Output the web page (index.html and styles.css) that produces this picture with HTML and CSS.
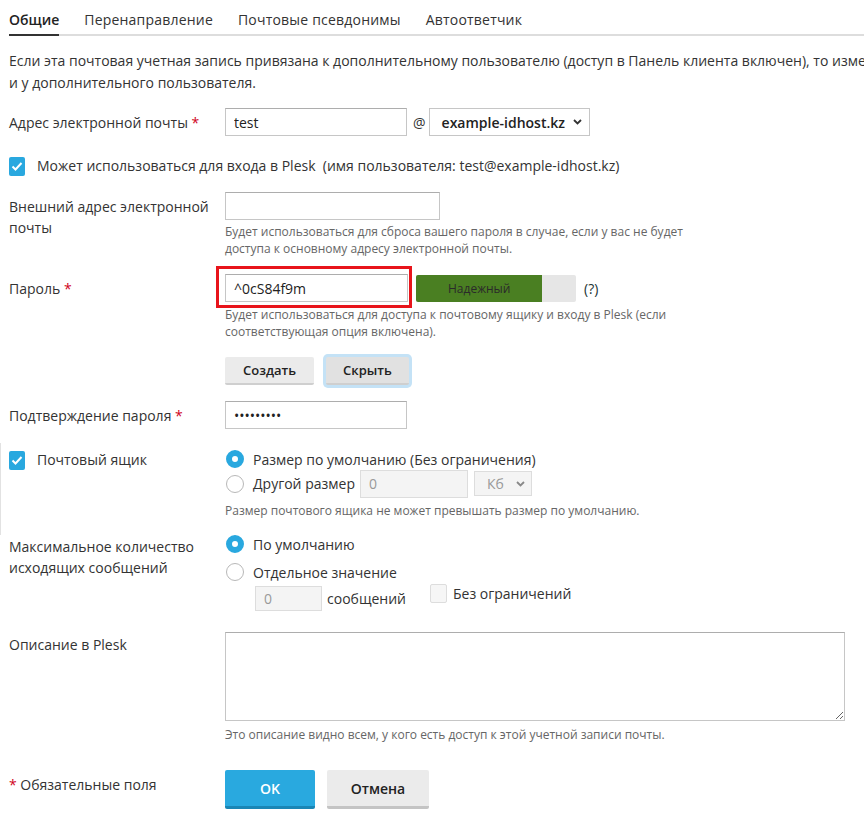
FILE: index.html
```html
<html>
<head>
    <meta charset="utf-8">
    <link rel="stylesheet" href="styles.css">
</head>
<body>
<div class="page">
    <div class="tabs">
        <span class="tab active">Общие</span>
        <span class="tab">Перенаправление</span>
        <span class="tab">Почтовые псевдонимы</span>
        <span class="tab">Автоответчик</span>
    </div>

    <p class="intro">Если эта почтовая учетная запись привязана к дополнительному пользователю (доступ в Панель клиента включен), то изменения будут применены<br>и у дополнительного пользователя.</p>

    <div class="row row-email">
        <div class="label">Адрес электронной почты <span class="req">*</span></div>
        <div class="field inline">
            <input class="input w-email" type="text" value="test">
            <span class="at">@</span>
            <div class="select select-domain">
                <span>example-idhost.kz</span>
                <svg width="9" height="6" viewBox="0 0 9 6"><path d="M1 1l3.5 3.5L8 1" fill="none" stroke="#333" stroke-width="1.8"/></svg>
            </div>
        </div>
    </div>

    <div class="row row-login">
        <div class="check">
            <span class="cb checked"><svg width="16" height="19" viewBox="0 0 16 19"><path d="M3.5 9.5l3 3 6-6.5" fill="none" stroke="#fff" stroke-width="2"/></svg></span>
            <span>Может использоваться для входа в Plesk &nbsp;(имя пользователя: test@example-idhost.kz)</span>
        </div>
    </div>

    <div class="row row-ext">
        <div class="label">Внешний адрес электронной почты</div>
        <div class="field">
            <input class="input w-ext" type="text" value="">
            <div class="hint">Будет использоваться для сброса вашего пароля в случае, если у вас не будет доступа к основному адресу электронной почты.</div>
        </div>
    </div>

    <div class="row row-pass">
        <div class="label">Пароль <span class="req">*</span></div>
        <div class="field">
            <div class="inline">
                <div class="marked">
                    <input class="input w-pass" type="text" value="^0cS84f9m">
                </div>
                <div class="strength">
                    <div class="strength-fill" style="width:79%">Надежный</div>
                </div>
                <span class="help">(?)</span>
            </div>
            <div class="hint">Будет использоваться для доступа к почтовому ящику и входу в Plesk (если соответствующая опция включена).</div>
            <div class="pass-buttons">
                <button class="btn">Создать</button>
                <button class="btn focused">Скрыть</button>
            </div>
        </div>
    </div>

    <div class="row row-confirm">
        <div class="label">Подтверждение пароля <span class="req">*</span></div>
        <div class="field">
            <input class="input w-confirm" type="password" value="^0cS84f9m">
        </div>
    </div>

    <div class="row row-mailbox">
        <div class="label-check">
            <span class="cb checked"><svg width="16" height="19" viewBox="0 0 16 19"><path d="M3.5 9.5l3 3 6-6.5" fill="none" stroke="#fff" stroke-width="2"/></svg></span>
            <span>Почтовый ящик</span>
        </div>
        <div class="field">
            <div class="opt">
                <span class="radio on"></span>
                <span>Размер по умолчанию (Без ограничения)</span>
            </div>
            <div class="opt opt-size">
                <span class="radio"></span>
                <span>Другой размер</span>
                <input class="input disabled w-size" type="text" value="0" disabled>
                <div class="select disabled select-unit">
                    <span>Кб</span>
                    <svg width="9" height="6" viewBox="0 0 9 6"><path d="M1 1l3.5 3.5L8 1" fill="none" stroke="#888" stroke-width="1.8"/></svg>
                </div>
            </div>
            <div class="hint hint-mailbox">Размер почтового ящика не может превышать размер по умолчанию.</div>
        </div>
    </div>

    <div class="row row-out">
        <div class="label label-out">Максимальное количество исходящих сообщений</div>
        <div class="field">
            <div class="opt">
                <span class="radio on"></span>
                <span>По умолчанию</span>
            </div>
            <div class="opt opt-custom">
                <span class="radio"></span>
                <span>Отдельное значение</span>
            </div>
            <div class="out-value">
                <input class="input disabled w-count" type="text" value="0" disabled>
                <span>сообщений</span>
                <div class="unlimited">
                    <span class="cb empty"></span>
                    <span>Без ограничений</span>
                </div>
            </div>
        </div>
    </div>

    <div class="row row-desc">
        <div class="label label-desc">Описание в Plesk</div>
        <div class="field">
            <textarea class="textarea"></textarea>
            <div class="hint hint-desc">Это описание видно всем, у кого есть доступ к этой учетной записи почты.</div>
        </div>
    </div>

    <div class="row row-submit">
        <div class="label label-req"><span class="req">*</span> Обязательные поля</div>
        <div class="field inline submit-buttons">
            <button class="btn btn-primary">OK</button>
            <button class="btn btn-big">Отмена</button>
        </div>
    </div>
</div>
</body>
</html>
```

FILE: styles.css
```css
body {
    margin:0;
    font-family:"Open Sans", "Noto Sans", sans-serif;
    font-size:14px;
    color:#333;
    background:#fff;
    overflow:hidden;
}

.page {
    padding:0 9px;
    width:1100px;
}

/* tabs */
.tabs {
    display:flex;
    gap:25px;
    padding-top:10px;
    border-bottom:2px solid #ddd;
}

.tab {
    line-height:20px;
    padding-bottom:4px;
    border-bottom:2px solid transparent;
    margin-bottom:-2px;
    color:#333;
    letter-spacing:0.2px;
}

.tab.active {
    font-weight:600;
    color:#222;
    letter-spacing:0;
    border-bottom-color:#333;
}

.intro {
    margin:14px 0 0;
    line-height:22px;
    white-space:nowrap;
}

/* rows */
.row {
    display:flex;
    align-items:flex-start;
}

.label {
    width:216px;
    flex:none;
    line-height:21px;
    padding-top:4px;
    box-sizing:border-box;
    padding-right:10px;
}

.req {
    color:#d0021b;
}

.field {
    flex:1;
}

.inline {
    display:flex;
    align-items:center;
}

.input {
    height:28px;
    box-sizing:border-box;
    border:1px solid #c6c6c6;
    border-top-color:#adadad;
    padding:0 8px;
    font-family:inherit;
    font-size:14px;
    color:#222;
    background:#fff;
    outline:0;
}

.input.disabled {
    background:#f4f4f4;
    border-color:#ddd;
    color:#999;
}

.w-email { width:182px; }
.w-ext { width:215px; }
.w-pass { width:183px; }
.w-confirm { width:182px; }
.w-size { width:108px; }
.w-count { width:67px; height:25px; }

.at {
    margin:0 3px 0 6px;
}

.select {
    height:28px;
    box-sizing:border-box;
    border:1px solid #c6c6c6;
    display:flex;
    align-items:center;
    justify-content:space-between;
    background:#fff;
}

.select-domain {
    width:161px;
    padding:0 7px 0 12px;
    font-weight:600;
    color:#222;
}

.select-unit {
    width:58px;
    height:25px;
    margin-left:-3px;
    padding:0 6px 0 12px;
}

.select.disabled {
    background:#f4f4f4;
    border-color:#ddd;
    color:#999;
}

.hint {
    font-size:12px;
    line-height:17px;
    color:#666;
    margin-top:3px;
    max-width:480px;
}

/* checkboxes and radios */
.check, .label-check {
    display:flex;
    align-items:center;
    gap:12px;
    line-height:20px;
}

.label-check {
    width:216px;
    flex:none;
}

.cb {
    width:16px;
    height:19px;
    flex:none;
    box-sizing:border-box;
    border-radius:2px;
    display:block;
}

.cb svg {
    display:block;
}

.cb.checked {
    background:#29a8df;
}

.cb.empty {
    width:17px;
    border:1px solid #ddd;
    background:#f6f6f6;
}

.radio {
    width:18px;
    height:18px;
    box-sizing:border-box;
    border-radius:50%;
    border:1px solid #b8b8b8;
    background:#fff;
    flex:none;
}

.radio.on {
    border:6px solid #29a8df;
    background:#fff;
}

.opt {
    display:flex;
    align-items:center;
    gap:9px;
    height:18px;
    margin-left:1px;
}

.opt-size {
    height:25px;
    margin-top:3px;
}

.opt-size .w-size {
    margin-left:-4px;
}

.opt-custom {
    margin-top:10px;
}

.out-value {
    display:flex;
    align-items:center;
    gap:5px;
    margin:3px 0 0 30px;
}

.unlimited {
    display:flex;
    align-items:center;
    gap:6px;
    margin:0 0 9px 19px;
}

/* password */
.marked {
    position:relative;
}

.marked:after {
    content:'';
    position:absolute;
    left:-9px;
    top:-8px;
    right:-4px;
    bottom:-6px;
    border:3px solid #e8141b;
}

.strength {
    width:160px;
    height:27px;
    margin-left:8px;
    background:#e6e6e6;
    border-radius:2px;
    overflow:hidden;
}

.strength-fill {
    height:100%;
    background:#4a7f22;
    color:#2a2a2a;
    font-size:12px;
    line-height:27px;
    text-align:center;
}

.help {
    margin-left:8px;
    color:#233;
}

.pass-buttons {
    display:flex;
    gap:12px;
    margin-top:17px;
}

.btn {
    height:28px;
    box-sizing:border-box;
    padding:0 18px;
    border:0;
    border-bottom:2px solid #cfcfcf;
    border-radius:2px;
    background:#ebebeb;
    font-family:inherit;
    font-size:13px;
    font-weight:600;
    color:#222;
}

.btn.focused {
    background:#e1e1e1;
    padding:0 17px;
    box-shadow:0 0 0 3px #c4e2f6;
}

.btn-primary, .btn-big {
    height:39px;
    font-size:14px;
    border-bottom-width:3px;
}

.btn-primary {
    width:90px;
    background:#29a9df;
    border-bottom-color:#1a86b5;
    color:#fff;
}

.btn-big {
    width:102px;
    border-bottom-color:#c4c4c4;
}

.submit-buttons {
    gap:12px;
}

/* vertical rhythm */
.row-email { margin-top:14px; }
.row-login { margin-top:20px; }
.row-ext { margin-top:16px; }
.row-pass { margin-top:17px; }
.row-pass .hint { margin-top:4px; }
.row-confirm { margin-top:16px; }

.row-mailbox {
    margin-top:21px;
    position:relative;
}

.row-mailbox:before {
    content:'';
    position:absolute;
    left:-9px;
    top:-7px;
    bottom:-16px;
    width:1px;
    background:#e2e2e2;
}

.hint-mailbox { margin-top:6px; }

.row-out { margin-top:16px; }
.label-out { padding-top:1px; }

.row-desc { margin-top:20px; }
.label-desc { padding-top:2px; }

.textarea {
    display:block;
    width:620px;
    height:89px;
    box-sizing:border-box;
    border:1px solid #c6c6c6;
    border-top-color:#adadad;
    resize:vertical;
    font-family:inherit;
    outline:0;
}

.hint-desc { margin-top:5px; }

.row-submit { margin-top:27px; }
.label-req { padding-top:4px; }
```
